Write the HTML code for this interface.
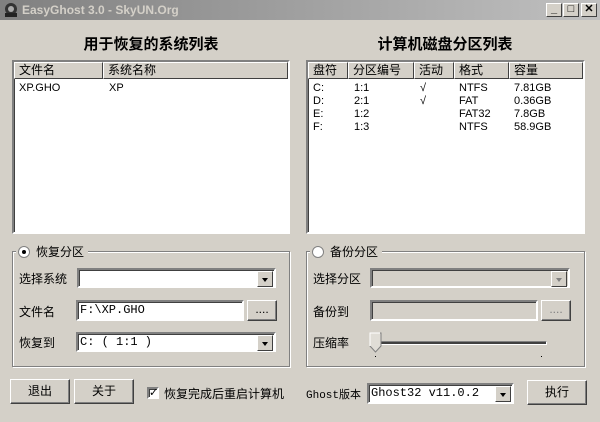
<!DOCTYPE html>
<html><head><meta charset="utf-8"><style>
*{margin:0;padding:0;box-sizing:border-box}
body{width:600px;height:422px;background:#d4d0c8;font-family:"Liberation Sans","Noto Sans CJK SC","WenQuanYi Zen Hei",sans-serif;font-size:12px;color:#000;position:relative;overflow:hidden}
.a{position:absolute}
.title{left:0;top:0;width:600px;height:20px;background:linear-gradient(90deg,#808080,#c0c0c0);}
.title span{position:absolute;left:22px;top:3px;font-weight:bold;font-size:12px;color:#d4d0c8}
.tb{top:3px;width:16px;height:14px;background:#d4d0c8;border:1px solid;border-color:#fff #404040 #404040 #fff;font-size:11px;font-weight:bold;text-align:center;line-height:11px}
.h{font-weight:bold;font-size:15px;top:33px;text-align:center}
.list{background:#fff;border:2px solid;border-color:#808080 #fff #fff #808080;box-shadow:inset 1px 1px 0 #404040}
.hd{position:absolute;top:0;height:17px;background:#d4d0c8;border:1px solid;border-color:#fff #404040 #404040 #fff;padding-left:4px;line-height:15px;font-size:12px}
.cell{position:absolute;font-size:11px}
.grp{border:1px solid #808080;box-shadow:1px 1px 0 #fff,inset 1px 1px 0 #fff}
.leg{background:#d4d0c8;padding:0 4px 0 2px;font-size:12px}
.radio{width:12px;height:12px;border-radius:50%;background:#fff;border:1px solid #808080;display:inline-block;vertical-align:-2px;margin-right:6px;position:relative}
.radio.on:after{content:"";position:absolute;left:3px;top:3px;width:4px;height:4px;border-radius:50%;background:#000}
.in{background:#fff;border:2px solid;border-color:#808080 #fff #fff #808080;box-shadow:inset 1px 1px 0 #404040;font-family:"Liberation Mono","Noto Sans CJK SC",monospace;font-size:12px;padding-left:2px;line-height:17px}
.dis{background:#d4d0c8}
.dd{position:absolute;right:1px;top:1px;width:16px;height:16px;background:#d4d0c8;border:1px solid;border-color:#fff #404040 #404040 #fff}
.dd:after{content:"";position:absolute;left:4px;top:6px;border:3px solid transparent;border-top:4px solid #000;border-bottom:0}
.dd.g:after{border-top-color:#808080}
.btn{background:#d4d0c8;border:1px solid;border-color:#fff #404040 #404040 #fff;box-shadow:inset -1px -1px 0 #808080;text-align:center;font-size:12px}
.lbl{font-size:12px}
</style></head><body>
<div class="a title"><svg class="a" style="left:3px;top:2px" width="16" height="16"><circle cx="8" cy="7" r="6" fill="#333"/><circle cx="8" cy="7" r="3" fill="#aaa"/><rect x="2" y="11" width="12" height="4" fill="#222"/></svg><span>EasyGhost 3.0 - SkyUN.Org</span></div>
<div class="a tb" style="left:546px">_</div>
<div class="a tb" style="left:563px">□</div>
<div class="a tb" style="left:581px">✕</div>

<div class="a h" style="left:12px;width:278px">用于恢复的系统列表</div>
<div class="a h" style="left:306px;width:278px">计算机磁盘分区列表</div>

<div class="a list" style="left:12px;top:60px;width:278px;height:174px">
<div class="hd" style="left:0;width:89px">文件名</div>
<div class="hd" style="left:89px;width:185px">系统名称</div>
<div class="cell" style="left:5px;top:20px">XP.GHO</div>
<div class="cell" style="left:95px;top:20px">XP</div>
</div>

<div class="a list" style="left:306px;top:60px;width:279px;height:174px">
<div class="hd" style="left:0;width:40px">盘符</div>
<div class="hd" style="left:40px;width:66px">分区编号</div>
<div class="hd" style="left:106px;width:40px">活动</div>
<div class="hd" style="left:146px;width:55px">格式</div>
<div class="hd" style="left:201px;width:74px">容量</div>
<div class="cell" style="left:5px;top:20px;line-height:13px">C:<br>D:<br>E:<br>F:</div>
<div class="cell" style="left:46px;top:20px;line-height:13px">1:1<br>2:1<br>1:2<br>1:3</div>
<div class="cell" style="left:112px;top:20px;line-height:13px">√<br>√</div>
<div class="cell" style="left:151px;top:20px;line-height:13px">NTFS<br>FAT<br>FAT32<br>NTFS</div>
<div class="cell" style="left:206px;top:20px;line-height:13px">7.81GB<br>0.36GB<br>7.8GB<br>58.9GB</div>
</div>

<div class="a grp" style="left:12px;top:251px;width:278px;height:116px"></div>
<div class="a leg" style="left:16px;top:243px"><span class="radio on"></span>恢复分区</div>
<div class="a lbl" style="left:19px;top:270px">选择系统</div>
<div class="a in" style="left:77px;top:268px;width:199px;height:20px"><div class="dd"></div></div>
<div class="a lbl" style="left:19px;top:303px">文件名</div>
<div class="a in" style="left:76px;top:300px;width:168px;height:21px">F:\XP.GHO</div>
<div class="a btn" style="left:247px;top:300px;width:30px;height:21px;line-height:17px">....</div>
<div class="a lbl" style="left:19px;top:334px">恢复到</div>
<div class="a in" style="left:76px;top:332px;width:200px;height:20px">C: ( 1:1 )<div class="dd"></div></div>

<div class="a grp" style="left:306px;top:251px;width:279px;height:116px"></div>
<div class="a leg" style="left:310px;top:243px"><span class="radio"></span>备份分区</div>
<div class="a lbl" style="left:313px;top:270px">选择分区</div>
<div class="a in dis" style="left:370px;top:268px;width:200px;height:20px"><div class="dd g"></div></div>
<div class="a lbl" style="left:313px;top:303px">备份到</div>
<div class="a in dis" style="left:370px;top:300px;width:168px;height:21px"></div>
<div class="a btn" style="left:541px;top:300px;width:30px;height:21px;line-height:17px;color:#808080">....</div>
<div class="a lbl" style="left:313px;top:334px">压缩率</div>
<div class="a" style="left:372px;top:341px;width:175px;height:4px;border:1px solid;border-color:#808080 #fff #fff #808080;background:#404040"></div>
<svg class="a" style="left:369px;top:332px" width="14" height="22"><path d="M1 1H12V14L6.5 20L1 14Z" fill="#e0ddd6" stroke="#808080"/><path d="M1 14V1H11" fill="none" stroke="#fff"/></svg>
<div class="a" style="left:375px;top:356px;width:1px;height:1px;background:#000"></div>
<div class="a" style="left:541px;top:356px;width:1px;height:1px;background:#000"></div>

<div class="a btn" style="left:10px;top:379px;width:60px;height:25px;line-height:22px">退出</div>
<div class="a btn" style="left:74px;top:379px;width:60px;height:25px;line-height:22px">关于</div>
<div class="a in" style="left:147px;top:387px;width:12px;height:12px;padding:0;font-size:11px;line-height:8px;font-weight:bold;text-align:center;font-family:'DejaVu Sans',sans-serif">✓</div>
<div class="a lbl" style="left:164px;top:385px">恢复完成后重启计算机</div>

<div class="a lbl" style="left:306px;top:386px;font-family:'Liberation Mono','Noto Sans CJK SC',monospace;font-size:11px">Ghost版本</div>
<div class="a in" style="left:367px;top:383px;width:147px;height:21px">Ghost32 v11.0.2<div class="dd"></div></div>
<div class="a btn" style="left:527px;top:380px;width:60px;height:25px;line-height:22px">执行</div>
</body></html>
